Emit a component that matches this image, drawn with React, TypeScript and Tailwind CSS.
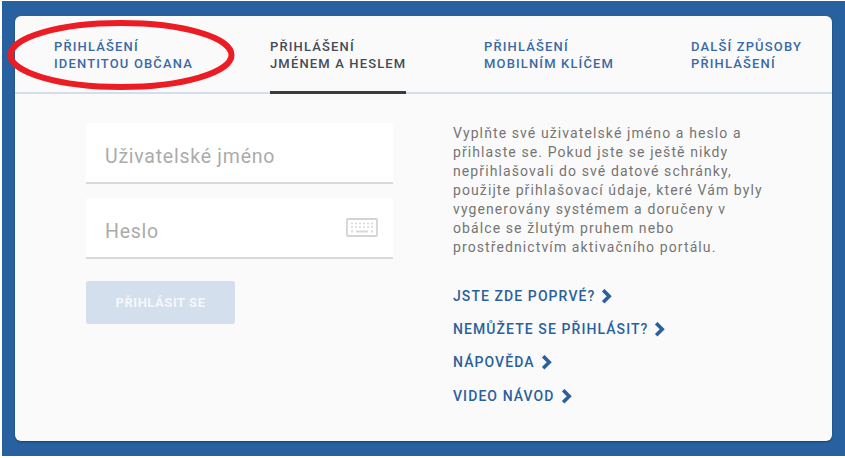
const tabs = [
  { lines: ["PŘIHLÁŠENÍ", "IDENTITOU OBČANA"], width: "w-[216px]", active: false },
  { lines: ["PŘIHLÁŠENÍ", "JMÉNEM A HESLEM"], width: "w-[214px]", active: true },
  { lines: ["PŘIHLÁŠENÍ", "MOBILNÍM KLÍČEM"], width: "w-[207px]", active: false },
  { lines: ["DALŠÍ ZPŮSOBY", "PŘIHLÁŠENÍ"], width: "w-[120px]", active: false },
];

const links = ["JSTE ZDE POPRVÉ?", "NEMŮŽETE SE PŘIHLÁSIT?", "NÁPOVĚDA", "VIDEO NÁVOD"];

function Chevron() {
  return (
    <svg width="11" height="15" viewBox="0 0 11 15" className="ml-[6px] shrink-0">
      <path d="M2.2 1.2 L8.2 7.2 L2.2 13.2" fill="none" stroke="#2a619d" strokeWidth="3.6" />
    </svg>
  );
}

function KeyboardIcon() {
  return (
    <svg width="32" height="20" viewBox="0 0 32 20">
      <rect x="1" y="1" width="30" height="17" rx="1" fill="none" stroke="#d4d4d4" strokeWidth="1.8" />
      <path
        d="M5 5.5h2M9 5.5h2M13 5.5h2M17 5.5h2M21 5.5h2M25 5.5h2M5 9h2M9 9h2M13 9h2M17 9h2M21 9h2M25 9h2"
        stroke="#d8d8d8"
        strokeWidth="1.6"
      />
      <path d="M5 13.5h2M10 13.5h12M25 13.5h2" stroke="#d8d8d8" strokeWidth="1.8" />
    </svg>
  );
}

export default function App() {
  return (
    <div className="h-[458px] w-[845px] overflow-hidden bg-white pl-[2px] pt-[1px] font-['Roboto',sans-serif]">
      <div className="h-[455px] w-[843px] bg-[#28619f] pl-[13px] pt-[15px]">
        <div className="relative h-[425px] w-[817px] rounded-[6px] bg-[#fafafa] shadow-[0_1px_2px_rgba(0,0,0,0.35)]">
          <div className="flex h-[78px] border-b-2 border-[#d3deea] pl-[39px]">
            {tabs.map((tab) => (
              <div key={tab.lines[1]} className={tab.width}>
                <div
                  className={`inline-block h-[78px] pt-[22px] text-[13px] leading-[17px] font-medium tracking-[1.15px] ${
                    tab.active ? "border-b-[3px] border-[#3b3b3b] text-[#454c56]" : "text-[#3a6aa5]"
                  }`}
                >
                  {tab.lines.map((line) => (
                    <div key={line}>{line}</div>
                  ))}
                </div>
              </div>
            ))}
          </div>

          <svg
            width="232"
            height="74"
            viewBox="0 0 232 74"
            className="absolute left-[-9px] top-[2px]"
          >
            <ellipse cx="115" cy="37" rx="110.5" ry="32" fill="none" stroke="#ec1c24" strokeWidth="6" />
          </svg>

          <div className="flex pl-[71px] pt-[29px]">
            <div className="w-[307px]">
              <div className="flex h-[61px] items-center rounded-t-[3px] border-b-2 border-[#d9d9d9] bg-white pl-[19px] pt-[8px] text-[19.5px] tracking-[0.75px] text-[#ababab]">
                Uživatelské jméno
              </div>
              <div className="mt-[14px] flex h-[61px] items-center justify-between rounded-t-[3px] border-b-2 border-[#d9d9d9] bg-white pl-[19px] pr-[15px] text-[19.5px] tracking-[0.75px] text-[#ababab]">
                <span className="pt-[8px]">Heslo</span>
                <KeyboardIcon />
              </div>
              <div className="mt-[22px] flex h-[43px] w-[149px] items-center justify-center rounded-[3px] bg-[#d3dfed] text-[13px] font-bold tracking-[0.55px] text-[#f5f8fb]">
                PŘIHLÁSIT SE
              </div>
            </div>

            <div className="ml-[60px] w-[320px]">
              <p className="pt-[1px] text-[14px] leading-[19px] tracking-[1.1px] text-[#757575]">
                Vyplňte své uživatelské jméno a heslo a
                <br />
                přihlaste se. Pokud jste se ještě nikdy
                <br />
                nepřihlašovali do své datové schránky,
                <br />
                použijte přihlašovací údaje, které Vám byly
                <br />
                vygenerovány systémem a doručeny v
                <br />
                obálce se žlutým pruhem nebo
                <br />
                prostřednictvím aktivačního portálu.
              </p>
              <div className="mt-[29px] flex flex-col gap-[13.4px]">
                {links.map((link) => (
                  <div
                    key={link}
                    className="flex h-[20px] items-center text-[14px] font-medium tracking-[1.08px] text-[#2a619d]"
                  >
                    {link}
                    <Chevron />
                  </div>
                ))}
              </div>
            </div>
          </div>
        </div>
      </div>
    </div>
  );
}
